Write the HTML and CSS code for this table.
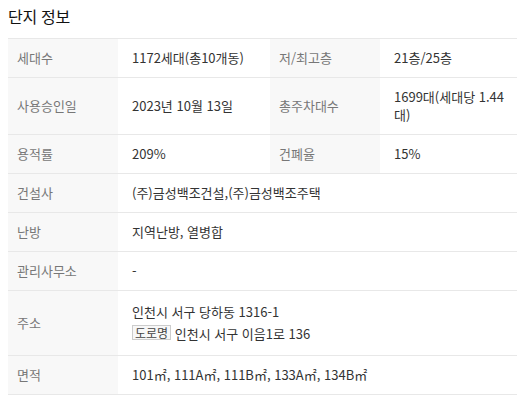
FILE: index.html
```html
<!DOCTYPE html>
<html lang="ko">
<head>
<meta charset="utf-8">
<link rel="stylesheet" href="styles.css">
</head>
<body>
<section class="complex">
  <h2 class="complex-title">단지 정보</h2>
  <table class="info-table">
    <colgroup>
      <col class="col-label">
      <col class="col-value">
      <col class="col-label">
      <col class="col-value2">
    </colgroup>
    <tbody>
      <tr>
        <th>세대수</th>
        <td>1172세대(총10개동)</td>
        <th>저/최고층</th>
        <td>21층/25층</td>
      </tr>
      <tr class="tall">
        <th>사용승인일</th>
        <td>2023년 10월 13일</td>
        <th>총주차대수</th>
        <td>1699대(세대당 1.44대)</td>
      </tr>
      <tr>
        <th>용적률</th>
        <td>209%</td>
        <th>건폐율</th>
        <td>15%</td>
      </tr>
      <tr>
        <th>건설사</th>
        <td colspan="3">(주)금성백조건설,(주)금성백조주택</td>
      </tr>
      <tr>
        <th>난방</th>
        <td colspan="3">지역난방, 열병합</td>
      </tr>
      <tr>
        <th>관리사무소</th>
        <td colspan="3">-</td>
      </tr>
      <tr>
        <th>주소</th>
        <td colspan="3">
          <div class="addr-line">인천시 서구 당하동 1316-1</div>
          <div class="addr-line"><span class="badge">도로명</span> 인천시 서구 이음1로 136</div>
        </td>
      </tr>
      <tr>
        <th>면적</th>
        <td colspan="3">101㎡, 111A㎡, 111B㎡, 133A㎡, 134B㎡</td>
      </tr>
    </tbody>
  </table>
</section>
</body>
</html>
```

FILE: styles.css
```css
* { box-sizing: border-box; }
body {
  margin: 8px;
  background: #fff;
  font-family: "Noto Sans CJK KR", "Noto Sans", sans-serif;
  color: #333;
}
.complex-title {
  margin: 0;
  height: 30px;
  font-size: 16px;
  font-weight: normal;
  line-height: 16px;
  color: #111;
  letter-spacing: -0.3px;
  padding-top: 0;
}
.info-table {
  width: 509px;
  table-layout: fixed;
  border-collapse: collapse;
  font-size: 13px;
  line-height: 18px;
}
.col-label { width: 110px; }
.col-value { width: 152px; }
.col-value2 { width: 137px; }
.info-table tr {
  border-top: 1px solid #e8e8e8;
  border-bottom: 1px solid #e8e8e8;
}
.info-table th {
  background: #f8f8f8;
  color: #777;
  font-weight: normal;
  text-align: left;
  padding: 10px 8px 10px 9px;
  height: 39px;
}
.info-table td {
  color: #333;
  padding: 10px 4px 10px 14px;
  vertical-align: middle;
}
.addr-line {
  height: 22px;
  line-height: 22px;
  white-space: nowrap;
}
.badge {
  display: inline-block;
  height: 15px;
  line-height: 13px;
  padding: 0 2px;
  border: 1px solid #ccc;
  background: #f7f7f7;
  color: #444;
  font-size: 12px;
  vertical-align: 1px;
}
```
